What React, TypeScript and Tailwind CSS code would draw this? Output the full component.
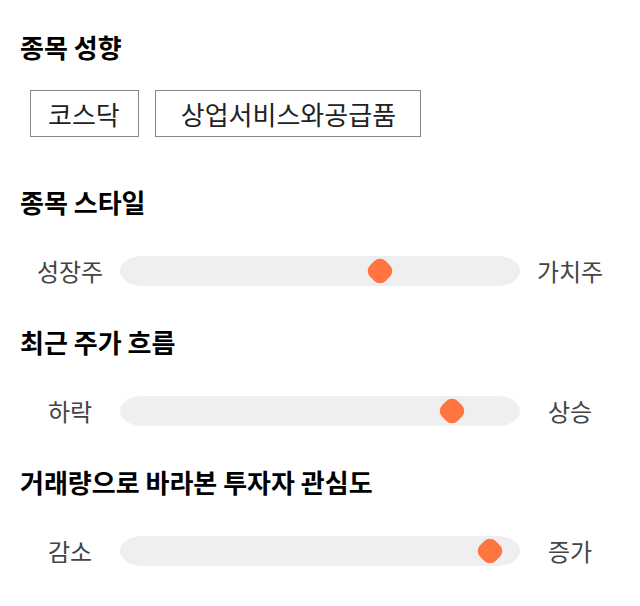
import React from "react";

const font = { fontFamily: '"Noto Sans CJK KR", "Noto Sans", sans-serif' };

function Slider({ left, right, pos }: { left: string; right: string; pos: number }) {
  return (
    <div className="flex items-center h-[30px]">
      <div className="w-[100px] text-center text-[24px] text-[#444] leading-none">{left}</div>
      <div className="relative flex-1 h-[30px] bg-[#efefef] rounded-[22px/15px]">
        <div
          className="absolute top-1/2 w-[22px] h-[22px] bg-[#ff7540] rounded-[8px] -translate-x-1/2 -translate-y-1/2 rotate-45"
          style={{ left: `${pos}px` }}
        />
      </div>
      <div className="w-[100px] text-center text-[24px] text-[#444] leading-none">{right}</div>
    </div>
  );
}

export default function App() {
  return (
    <div className="w-[640px] h-[606px] bg-white px-[20px] text-black" style={font}>
      <div className="pt-[30px] text-[26px] font-bold leading-[34px]">종목 성향</div>
      <div className="flex gap-[16px] mt-[26px] pl-[10px]">
        <div className="h-[47px] pl-[17px] pr-[18px] border border-[#888] flex items-center text-[26px] text-[#222]">코스닥</div>
        <div className="h-[47px] pl-[25px] pr-[24px] border border-[#888] flex items-center text-[26px] text-[#222]">상업서비스와공급품</div>
      </div>
      <div className="mt-[48px] text-[26px] font-bold leading-[34px]">종목 스타일</div>
      <div className="mt-[37px]">
        <Slider left="성장주" right="가치주" pos={260} />
      </div>
      <div className="mt-[39px] text-[26px] font-bold leading-[34px]">최근 주가 흐름</div>
      <div className="mt-[37px]">
        <Slider left="하락" right="상승" pos={332} />
      </div>
      <div className="mt-[39px] text-[26px] font-bold leading-[34px]">거래량으로 바라본 투자자 관심도</div>
      <div className="mt-[37px]">
        <Slider left="감소" right="증가" pos={370} />
      </div>
    </div>
  );
}
